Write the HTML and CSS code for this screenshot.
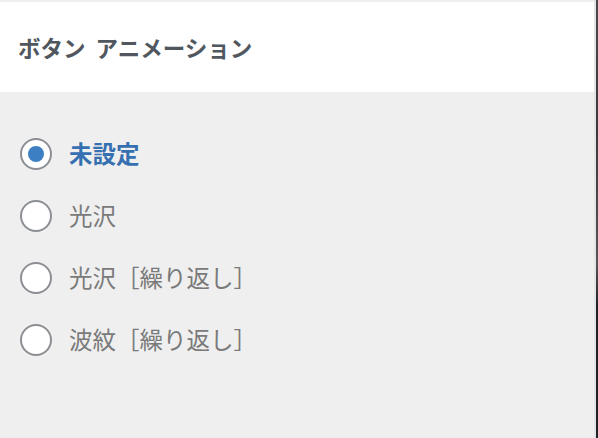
FILE: index.html
```html
<!DOCTYPE html>
<html lang="ja">
<head>
<meta charset="utf-8">
<link rel="stylesheet" href="styles.css">
</head>
<body>
<div class="frame">
  <div class="panel">
    <header class="panel-header">
      <h2 class="title">ボタン アニメーション</h2>
    </header>
    <div class="options">
      <label class="option is-checked"><span class="radio"><span class="dot"></span></span><span class="label">未設定</span></label>
      <label class="option"><span class="radio"></span><span class="label">光沢</span></label>
      <label class="option"><span class="radio"></span><span class="label">光沢［繰り返し］</span></label>
      <label class="option"><span class="radio"></span><span class="label">波紋［繰り返し］</span></label>
    </div>
  </div>
  <div class="gutter"></div>
  <div class="edge"></div>
</div>
</body>
</html>
```

FILE: styles.css
```css
html, body {
  margin: 0;
  padding: 0;
  height: 100%;
}
body {
  background: #efefef;
  font-family: "Noto Sans CJK JP", "Noto Sans", sans-serif;
  overflow: hidden;
}
.frame {
  display: flex;
  height: 438px;
  width: 598px;
}
.panel {
  width: 594px;
  display: flex;
  flex-direction: column;
  padding-top: 2px;
}
.panel-header {
  background: #ffffff;
  height: 90px;
  display: flex;
  align-items: center;
  padding-left: 18px;
}
.title {
  margin: 0;
  font-size: 22.5px;
  font-weight: 700;
  color: #50575e;
  line-height: 1;
  padding-top: 1px;
  word-spacing: 5px;
}
.options {
  display: flex;
  flex-direction: column;
  gap: 30px;
  padding: 46px 0 0 20px;
}
.option {
  display: flex;
  align-items: center;
  gap: 17px;
  height: 32px;
}
.radio {
  width: 32px;
  height: 32px;
  box-sizing: border-box;
  border: 2px solid #8c8f94;
  border-radius: 50%;
  background: #ffffff;
  display: flex;
  align-items: center;
  justify-content: center;
  flex: none;
}
.dot {
  width: 16px;
  height: 16px;
  border-radius: 50%;
  background: #3d7fc3;
}
.label {
  font-size: 23.5px;
  line-height: 1;
  color: #7a7a7a;
}
.is-checked .label {
  color: #3670b0;
  font-weight: 700;
}
.gutter {
  width: 2px;
  background: #e4e4e4;
}
.edge {
  width: 2px;
  background: linear-gradient(#4a4a4a, #3a3a3a 30%, #555 60%, #1f2328 70%, #1f2328);
}
```
